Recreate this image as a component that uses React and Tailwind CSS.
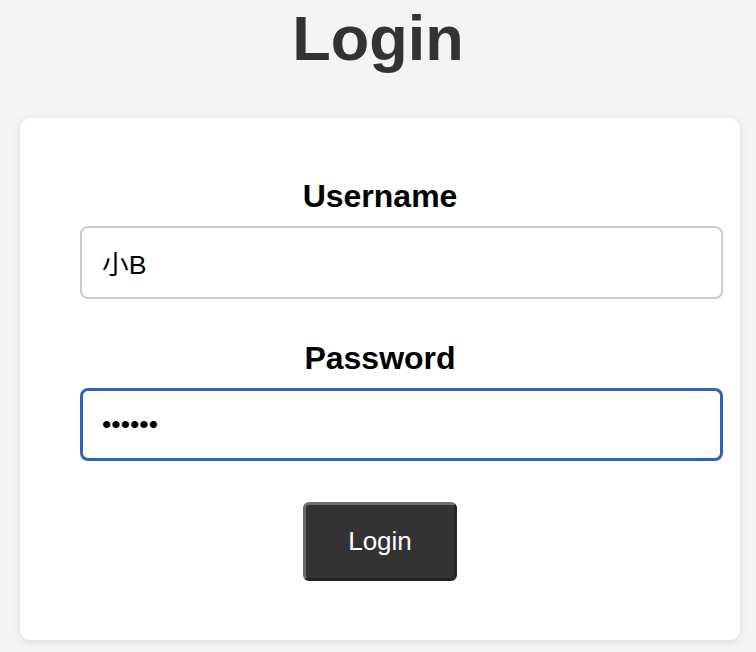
import React from 'react';

export default function App() {
  return (
    <div className="min-h-[652px] w-[756px] bg-[#f4f4f4] overflow-hidden" style={{ fontFamily: '"Liberation Sans", "Noto Sans CJK SC", Arial, sans-serif' }}>
      <h1 className="pt-[7px] text-center text-[63px] leading-none font-bold text-[#333333]">Login</h1>

      {/* login card */}
      <div className="mt-[48px] ml-[20px] w-[720px] h-[522px] bg-white rounded-[10px] shadow-[0_2px_8px_rgba(0,0,0,0.1)] pt-[62px]">
        <label className="block text-center text-[32px] leading-none font-bold text-black">Username</label>
        <input
          type="text"
          defaultValue="小B"
          className="block mt-[14px] ml-[60px] w-[643px] h-[73px] px-[20px] border-2 border-[#cccccc] rounded-[8px] text-[26.67px] text-black bg-white outline-none"
        />

        <label className="block mt-[43px] text-center text-[32px] leading-none font-bold text-black">Password</label>
        <input
          type="password"
          defaultValue="123456"
          className="block mt-[14px] ml-[60px] w-[643px] h-[73px] px-[19px] border-[3px] border-[#2c64c1] rounded-[8px] text-[26.67px] text-black bg-white outline-none"
        />

        <div className="flex justify-center mt-[41px]">
          <button
            type="button"
            className="w-[154px] h-[79px] bg-[#333333] text-white text-[26px] rounded-[6px] border-[3px] border-t-[#707070] border-l-[#6a6a6a] border-r-[#262626] border-b-[#222222]"
          >
            Login
          </button>
        </div>
      </div>
    </div>
  );
}
